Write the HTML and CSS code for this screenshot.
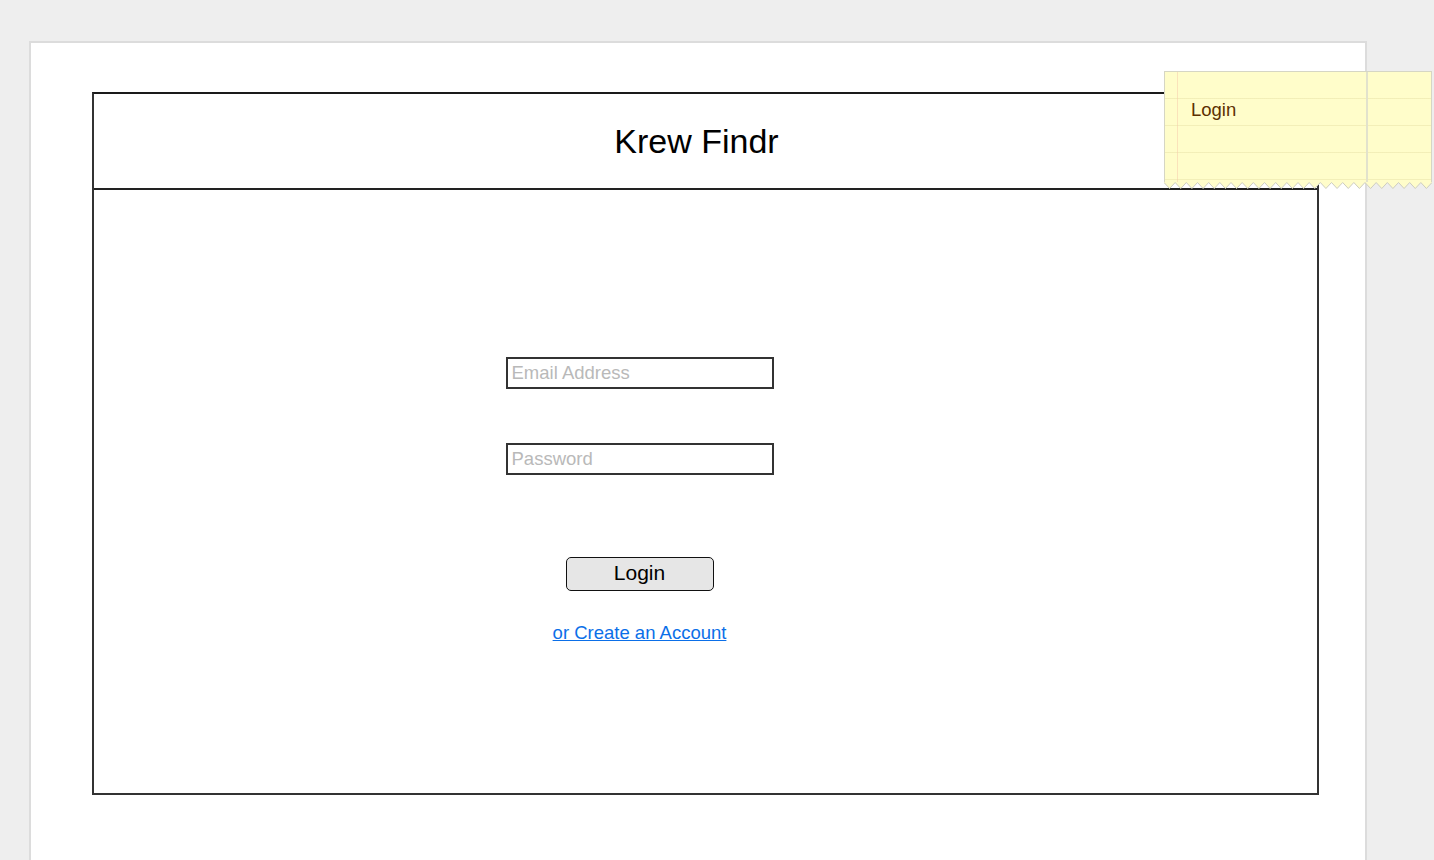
FILE: index.html
```html
<!DOCTYPE html>
<html lang="en">
<head>
<meta charset="utf-8">
<title>Krew Findr – Login</title>
<link rel="stylesheet" href="styles.css">
</head>
<body>
<div class="canvas">
  <div class="frame">
    <header class="bar"><h1 class="title">Krew Findr</h1></header>
    <main class="content">
      <form class="login">
        <input class="field field-email" type="text" placeholder="Email Address">
        <input class="field field-pw" type="password" placeholder="Password">
        <button class="btn" type="button">Login</button>
        <a class="link" href="#">or Create an Account</a>
      </form>
    </main>
  </div>
</div>
<div class="sticky">
  <div class="sticky-body"><span class="sticky-text">Login</span></div>
  <svg class="zig" width="268" height="7" viewBox="0 0 264 7" preserveAspectRatio="none">
    <path d="M0,0.5 L5.5,6.5 L11,0.5 L16.5,6.5 L22,0.5 L27.5,6.5 L33,0.5 L38.5,6.5 L44,0.5 L49.5,6.5 L55,0.5 L60.5,6.5 L66,0.5 L71.5,6.5 L77,0.5 L82.5,6.5 L88,0.5 L93.5,6.5 L99,0.5 L104.5,6.5 L110,0.5 L115.5,6.5 L121,0.5 L126.5,6.5 L132,0.5 L137.5,6.5 L143,0.5 L148.5,6.5 L154,0.5 L159.5,6.5 L165,0.5 L170.5,6.5 L176,0.5 L181.5,6.5 L187,0.5 L192.5,6.5 L198,0.5 L203.5,6.5 L209,0.5 L214.5,6.5 L220,0.5 L225.5,6.5 L231,0.5 L236.5,6.5 L242,0.5 L247.5,6.5 L253,0.5 L258.5,6.5 L264,0.5 V0 H0 Z" fill="#fffdca"/>
    <polyline points="0,0.5 5.5,6.5 11,0.5 16.5,6.5 22,0.5 27.5,6.5 33,0.5 38.5,6.5 44,0.5 49.5,6.5 55,0.5 60.5,6.5 66,0.5 71.5,6.5 77,0.5 82.5,6.5 88,0.5 93.5,6.5 99,0.5 104.5,6.5 110,0.5 115.5,6.5 121,0.5 126.5,6.5 132,0.5 137.5,6.5 143,0.5 148.5,6.5 154,0.5 159.5,6.5 165,0.5 170.5,6.5 176,0.5 181.5,6.5 187,0.5 192.5,6.5 198,0.5 203.5,6.5 209,0.5 214.5,6.5 220,0.5 225.5,6.5 231,0.5 236.5,6.5 242,0.5 247.5,6.5 253,0.5 258.5,6.5 264,0.5" fill="none" stroke="#cdcdc0" stroke-width="1" vector-effect="non-scaling-stroke"/>
  </svg>
</div>
</body>
</html>
```

FILE: styles.css
```css
html, body {
  margin: 0;
  padding: 0;
}

body {
  background: #eeeeee;
  height: 860px;
  overflow: hidden;
  font-family: "Liberation Sans", Arial, Helvetica, sans-serif;
}

.canvas {
  box-sizing: border-box;
  margin: 41px 0 0 29px;
  width: 1338px;
  height: 830px;
  background: #ffffff;
  border: 2px solid #dcdcdc;
  border-bottom: none;
  padding: 49px 0 0 61px;
}

.frame {
  box-sizing: border-box;
  width: 1227px;
  height: 703px;
  border: 2px solid #333333;
  border-top-color: #1a1a1a;
  display: flex;
  flex-direction: column;
}

.bar {
  height: 94px;
  border-bottom: 2px solid #222222;
  display: flex;
  align-items: center;
  justify-content: center;
  padding-right: 18px;
}

.title {
  margin: 0;
  font-size: 34px;
  font-weight: normal;
  color: #000000;
  line-height: 40px;
}

.content {
  flex: 1;
  display: flex;
  justify-content: center;
  padding-right: 132px;
}

.login {
  margin-top: 167px;
  display: flex;
  flex-direction: column;
  align-items: center;
}

.field {
  box-sizing: border-box;
  width: 268px;
  height: 32px;
  margin: 0;
  border: 2px solid #333333;
  border-radius: 0;
  padding: 0 0 0 4px;
  font-family: "Liberation Sans", Arial, sans-serif;
  font-size: 18.5px;
  color: #333;
  background: #fff;
  outline: none;
}

.field::placeholder {
  color: #b9b9b9;
  opacity: 1;
}

.field-email {
  margin-bottom: 54px;
}

.btn {
  box-sizing: border-box;
  margin-top: 82px;
  width: 148px;
  height: 34px;
  border: 1px solid #111111;
  border-radius: 5px;
  background: #e6e6e6;
  font-family: "Liberation Sans", Arial, sans-serif;
  font-size: 21px;
  color: #000;
  padding: 0 0 3px;
  line-height: 28px;
}

.link {
  margin-top: 31px;
  font-size: 18.5px;
  line-height: 21px;
  color: #0b6fe8;
  text-decoration: underline;
}

.sticky {
  position: absolute;
  left: 1164px;
  top: 71px;
  width: 268px;
}

.sticky-body {
  box-sizing: border-box;
  height: 112px;
  border: 1px solid #d6d6c4;
  border-bottom: none;
  padding: 27px 0 0 26px;
  background:
    linear-gradient(to right, transparent 12px, rgba(245, 200, 170, 0.5) 12px, rgba(245, 200, 170, 0.5) 13px, transparent 13px),
    linear-gradient(to right, transparent 201px, #e2e2cc 201px, #e2e2cc 203px, transparent 203px),
    repeating-linear-gradient(to bottom, transparent 0, transparent 26px, rgba(220, 212, 150, 0.35) 26px, rgba(220, 212, 150, 0.35) 27px),
    #fffdca;
}

.sticky-text {
  display: block;
  font-size: 18.5px;
  line-height: 22px;
  color: #5c3000;
}

.zig {
  display: block;
  margin-top: -1px;
}
```
